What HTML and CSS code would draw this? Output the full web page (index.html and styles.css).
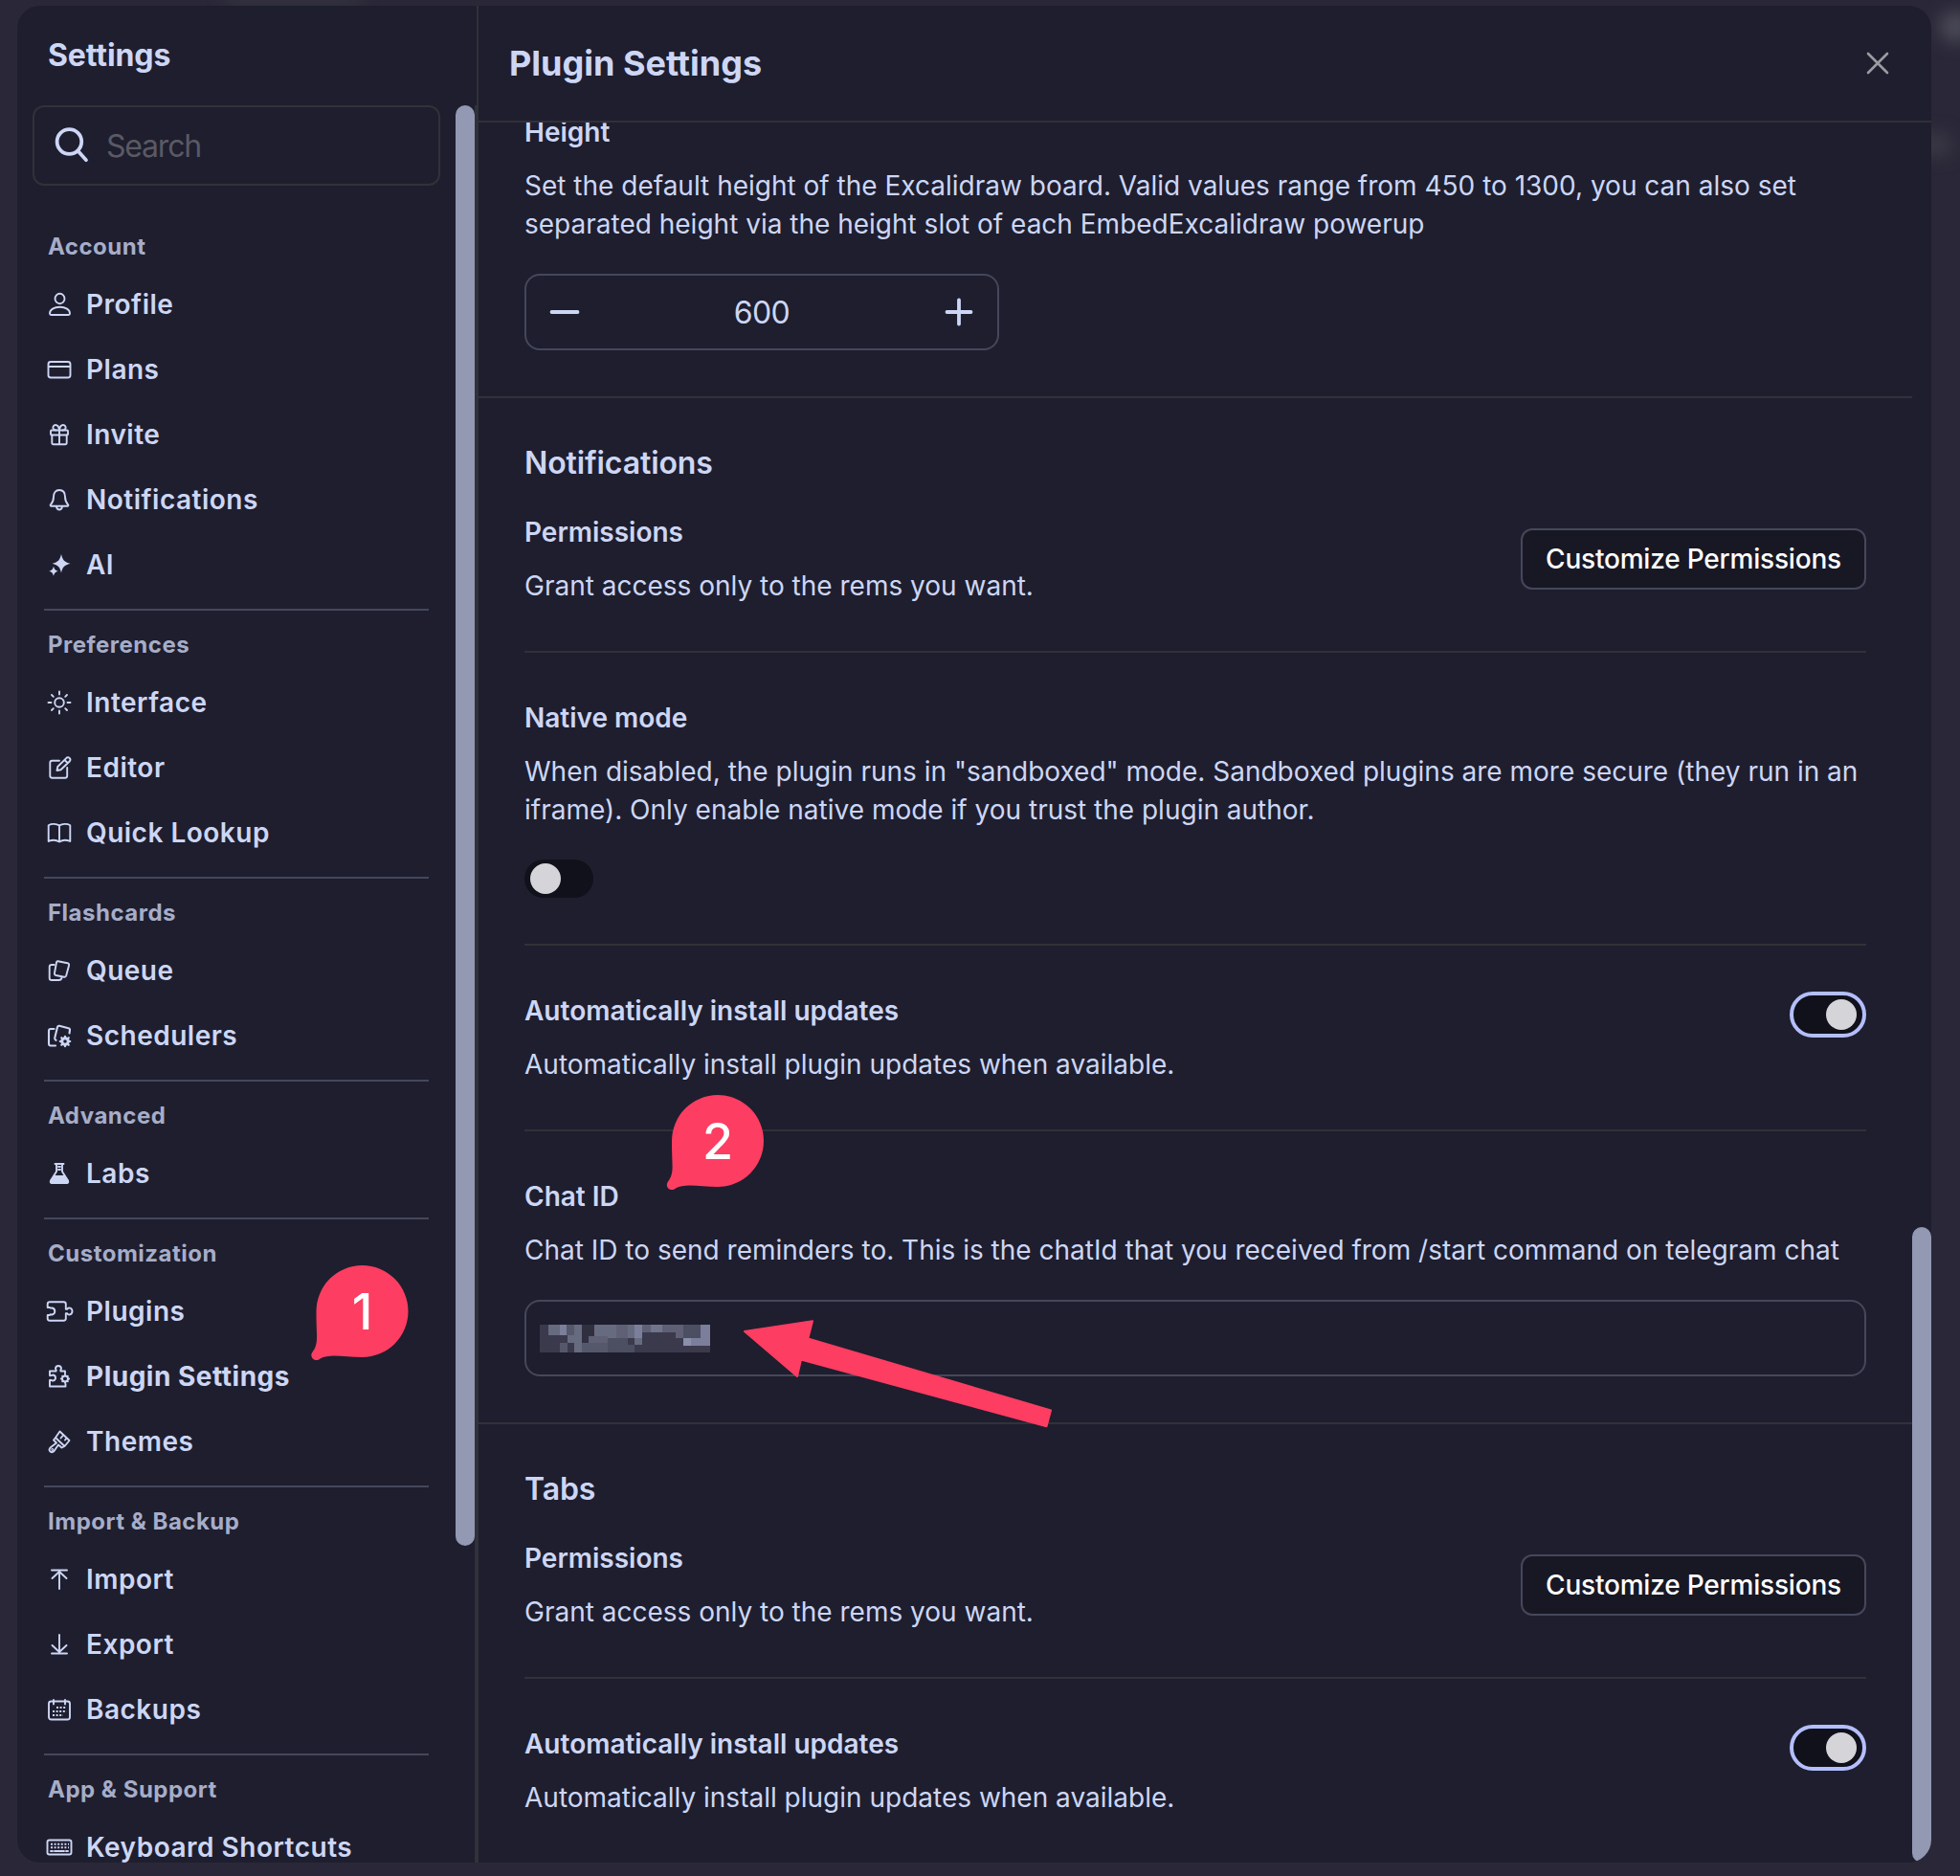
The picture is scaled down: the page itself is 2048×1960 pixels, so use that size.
FILE: index.html
```html
<!DOCTYPE html>
<html lang="en">
<head>
<meta charset="utf-8">
<title>Plugin Settings</title>
<link rel="stylesheet" href="styles.css">
</head>
<body>
<div class="glow glow-top"></div>
<div class="glow glow-avatar"></div>
<div class="glow glow-side"></div>
<div class="modal">
  <aside class="sidebar">
    <h2 class="sidebar-title">Settings</h2>
    <div class="sidebar-body">
      <div class="sidebar-list">
        <div class="search">
          <svg class="search-icon" viewBox="0 0 36 38"><circle cx="15.4" cy="15" r="12.8"/><path d="M24.5 24.8 33 34.2"/></svg>
          <span class="search-text">Search</span>
        </div>
        <section class="group">
          <h3>Account</h3>
          <a><svg viewBox="0 0 24 24"><ellipse cx="12.5" cy="6" rx="5" ry="5.2"/><path d="M2 21.5C2 17.500 6.500 14.800 12.500 14.800S23 17.500 23 21.500Q23 23 21.500 23H3.500Q2 23 2 21.500Z"/></svg><span>Profile</span></a>
          <a><svg viewBox="0 0 24 24"><rect x=".5" y="4" width="23" height="16.500" rx="2.500"/><path d="M1 9H23"/></svg><span>Plans</span></a>
          <a><svg viewBox="0 0 24 24"><rect x="3" y="7.500" width="18" height="5" rx="1"/><path d="M4.300 12.500V20.500Q4.300 22.300 6 22.300H18Q19.700 22.300 19.700 20.500V12.500M12 7.500V22.300M12 7.500C11.500 3.500 10 2 8 2S5 4 5.500 5.500 7 7.500 8.500 7.500M12 7.500C12.500 3.500 14 2 16 2S19 4 18.500 5.500 17 7.500 15.500 7.500"/></svg><span>Invite</span></a>
          <a><svg viewBox="0 0 24 24"><path d="M12 2C8 2 6 5 6 9C6 14 4.500 15.500 2.700 17.500Q2.500 18.700 3.500 18.700H20.500Q21.500 18.700 21.300 17.500C19.500 15.500 18 14 18 9C18 5 16 2 12 2ZM9 19.500C9.500 21.800 10.500 22.500 12 22.500S14.500 21.800 15 19.500"/></svg><span>Notifications</span></a>
          <a><svg class="solid" viewBox="0 0 24 24"><path d="M14 1C15.700 7.500 17 9 23.500 10.800C17 12.600 15.700 14.100 14 20.600C12.300 14.100 11 12.600 4.500 10.800C11 9 12.300 7.500 14 1ZM6 13.700C7 17 7.500 17.700 11 18.700C7.500 19.700 7 20.400 6 23.700C5 20.400 4.500 19.700 1 18.700C4.500 17.700 5 17 6 13.700Z"/></svg><span>AI</span></a>
        </section>
        <section class="group">
          <h3>Preferences</h3>
          <a><svg viewBox="0 0 24 24"><circle cx="12" cy="12" r="4.800"/><path d="M12 .5V3.500M12 20.500V23.500M.5 12H3.500M20.500 12H23.500M4 4 5.800 5.800M18.200 18.200 20 20M4 20 5.800 18.200M18.200 5.800 20 4"/></svg><span>Interface</span></a>
          <a><svg viewBox="0 0 24 24"><path d="M12 4.800H4.500Q2.300 4.800 2.300 7V20.500Q2.300 22.700 4.500 22.700H18Q20.200 22.700 20.200 20.500V12M9.500 15 10.300 11 19.500 1.800Q21 .5 22.600 1.900T22.900 5.200L13.500 14.200ZM17.500 4 20.500 7"/></svg><span>Editor</span></a>
          <a><svg viewBox="0 0 24 24"><path d="M12 4.500C9 2.500 4 2.300 .7 4.200V21C4 19.600 9 19.600 12 21.500C15 19.600 20 19.600 23.300 21V4.200C20 2.300 15 2.500 12 4.500ZM12 4.500V21.500"/></svg><span>Quick Lookup</span></a>
        </section>
        <section class="group">
          <h3>Flashcards</h3>
          <a><svg viewBox="0 0 24 24"><path d="M6.500 6H4Q1.700 6 1.700 8V20Q1.700 22 4 22H11.500Q14 22 14.500 19.500M10.500 2.200 20.500 4.200Q22.500 4.700 22 6.700L19.200 17.300Q18.700 19 17 18.700L8.500 17Q6.500 16.500 7 14.500L9 3.500Q9.300 2 10.500 2.200Z"/></svg><span>Queue</span></a>
          <a><svg class="heavy" viewBox="0 0 24 24"><path d="M6.500 5H3Q1 5 1 7V20.500Q1 22.500 3 22.500H8M22.500 9.500 23 6Q23.300 4.500 21.500 4.200L12 1.800Q10.500 1.500 10 3L7.200 14.500Q7 16 8.500 16.800"/><circle class="ring" cx="18" cy="18" r="3.300"/><path d="M18 12.700V14M18 22V23.300M12.700 18H14M22 18H23.300M14.200 14.200 15 15M21 21 21.800 21.800M14.200 21.800 15 21M21 15 21.800 14.200"/></svg><span>Schedulers</span></a>
        </section>
        <section class="group">
          <h3>Advanced</h3>
          <a><svg viewBox="0 0 24 24"><path d="M7.500 2H16.500M9 2V10L3 19.500Q2 22 4.500 22H19.500Q22 22 21 19.500L15 10V2M11 5H13M11 8H13"/><path class="fill" d="M6.500 15H17.500L21 20Q21.500 22 19.500 22H4.500Q2.500 22 3 20Z"/></svg><span>Labs</span></a>
        </section>
        <section class="group">
          <h3>Customization</h3>
          <a><svg viewBox="0 0 24 24"><path d="M-.3 8V4.500Q-.3 2.300 2 2.300H16.500Q18.800 2.300 18.800 4.500V9.800H20.300C21 7.800 25.500 8 25.500 12S21 16.200 20.300 14.200H18.800V19.500Q18.800 21.700 16.500 21.700H2Q-.3 21.700-.3 19.500V16H2C3 14.500 3 15.800 4.500 15.500Q7.300 14.800 7.300 12T4.500 8.500C3 8.200 3 9.500 2 8Z"/></svg><span>Plugins</span></a>
          <a class="current"><svg viewBox="0 0 24 24"><path d="M18 9V6.500H13.500C12.500 5.500 14 5 14 3.500Q13.500 1 11 1T8 3.500C8 5 9.500 5.500 8.500 6.500H2V11C3 12 4 10.500 5.500 10.500Q8 11 8 13.500T5.500 16.500C4 16.500 3 15 2 16V22.500H18.500V20"/><circle cx="18" cy="14.500" r="3"/><path d="M18 10.300V11.500M18 17.500V18.700M13.800 14.500H15M21 14.500H22.200M15.200 11.700 15.900 12.400M20.100 16.600 20.800 17.300M15.200 17.300 15.900 16.600M20.100 12.400 20.800 11.700"/></svg><span>Plugin Settings</span></a>
          <a><svg viewBox="0 0 24 24"><path d="M12.500 1.500 22.500 11 17.500 17 8 8ZM8 8 6 10.500 9 13.500 2.500 18.500Q.5 21 2.500 22.500T6.500 22L11 15.500 14.500 18.500 17.500 17M16 5.500 13.500 8.500M19.500 8.500 18 10.500"/><circle cx="4.700" cy="20.500" r=".5"/></svg><span>Themes</span></a>
        </section>
        <section class="group">
          <h3>Import &amp; Backup</h3>
          <a><svg viewBox="0 0 24 24"><path d="M4 2.500H20M12 4V22M4.500 11 12 4 19.500 11"/></svg><span>Import</span></a>
          <a><svg viewBox="0 0 24 24"><path d="M4 21.500H20M12 2V20M4.500 13 12 20 19.500 13"/></svg><span>Export</span></a>
          <a><svg viewBox="0 0 24 24"><rect x="1" y="3.500" width="22" height="19" rx="2.500"/><path d="M6 2V6.500M18 2V6.500"/><path class="dots" d="M9 10H19.500M5 14H19.500M5 18H16"/></svg><span>Backups</span></a>
        </section>
        <section class="group">
          <h3>App &amp; Support</h3>
          <a><svg viewBox="0 0 24 24"><rect x="-.5" y="4.500" width="25" height="15" rx="2"/><path class="dots" d="M3 8.700H22M3 12.300H22"/><path d="M3 16H5M7 16H17M19 16H21"/></svg><span>Keyboard Shortcuts</span></a>
        </section>
      </div>
      <div class="thumb sidebar-thumb"></div>
    </div>
  </aside>
  <main class="main">
    <header class="main-header">
      <h1>Plugin Settings</h1>
      <svg class="close" viewBox="0 0 24 24"><path d="M2 2 22 22M22 2 2 22"/></svg>
    </header>
    <div class="scroller">
      <div class="content">
        <section class="plugin plugin-first">
          <div class="setting">
            <h4>Height</h4>
            <p>Set the default height of the Excalidraw board. Valid values range from 450 to 1300, you can also set<br>separated height via the height slot of each EmbedExcalidraw powerup</p>
            <div class="stepper">
              <svg viewBox="0 0 32 32"><path d="M2.500 16H29.500"/></svg>
              <span>600</span>
              <svg viewBox="0 0 32 32"><path d="M3.500 16H28.500M16 3.500V28.500"/></svg>
            </div>
          </div>
        </section>
        <section class="plugin">
          <h3 class="plugin-name">Notifications</h3>
          <div class="setting split no-top">
            <div><h4>Permissions</h4><p>Grant access only to the rems you want.</p></div>
            <button class="button">Customize Permissions</button>
          </div>
          <div class="setting">
            <h4>Native mode</h4>
            <p>When disabled, the plugin runs in "sandboxed" mode. Sandboxed plugins are more secure (they run in an<br>iframe). Only enable native mode if you trust the plugin author.</p>
            <div class="toggle"><i></i></div>
          </div>
          <div class="setting split split-top">
            <div><h4>Automatically install updates</h4><p>Automatically install plugin updates when available.</p></div>
            <div class="toggle on"><i></i></div>
          </div>
          <div class="setting">
            <h4>Chat ID</h4>
            <p>Chat ID to send reminders to. This is the chatId that you received from /start command on telegram chat</p>
            <div class="input">
              <svg class="mosaic" viewBox="0 0 178 29" shape-rendering="crispEdges">
                <path fill="#3b3a4c" d="M0 0H178V29H0Z"/>
                <path fill="#676b80" d="M9 0H21V11H9ZM36 0H44V29H36ZM57 0H80V14H57ZM92 0H99V14H92ZM29 11H36V19H29ZM99 14H107V21H99Z"/>
                <path fill="#7b7f9b" d="M21 0H28V11H21ZM99 0H107V14H99ZM168 0H178V22H168ZM158 14H178V22H158Z"/>
                <path fill="#8a8fab" d="M150 14H158V22H150Z"/>
                <path fill="#5f6075" d="M80 0H92V14H80ZM107 0H116V8H107ZM128 0H150V8H128ZM142 0H150V14H142ZM51 12H71V19H51Z"/>
                <path fill="#70758b" d="M116 0H128V8H116Z"/>
                <path fill="#55576b" d="M28 0H36V11H28ZM21 19H29V29H21ZM44 19H71V29H44Z"/>
                <path fill="#4c4f61" d="M71 14H92V29H71ZM92 21H99V29H92ZM150 0H168V14H150Z"/>
                <path fill="#302f40" d="M44 0H57V12H51V19H44Z"/>
              </svg>
            </div>
          </div>
        </section>
        <section class="plugin">
          <h3 class="plugin-name">Tabs</h3>
          <div class="setting split no-top">
            <div><h4>Permissions</h4><p>Grant access only to the rems you want.</p></div>
            <button class="button">Customize Permissions</button>
          </div>
          <div class="setting split split-top">
            <div><h4>Automatically install updates</h4><p>Automatically install plugin updates when available.</p></div>
            <div class="toggle on"><i></i></div>
          </div>
        </section>
      </div>
      <div class="thumb main-thumb"></div>
    </div>
  </main>
</div>
<svg class="marks" viewBox="0 0 2048 1960">
  <defs><path id="pin" d="M0-48A48 48 0 0 1 0 48C-18 48-34 43.500-44 49.500C-49 54-56 48-52 42.500C-46 35-47.500 27-47.800 14C-48 8-48 4-48 0A48 48 0 0 1 0-48Z"/></defs>
  <g transform="translate(378.500 1370)"><use href="#pin"/><text y="19">1</text></g>
  <g transform="translate(750 1192)"><use href="#pin"/><text y="19">2</text></g>
  <path class="arrow" d="M778 1391 849 1380.300 844.300 1398.500 1098 1473.500 1093.500 1490.300 837 1420.500 833 1438Z"/>
</svg>
</body>
</html>
```
FILE: styles.css
```css
* { box-sizing: border-box; }
body {
  margin: 0;
  width: 2048px;
  height: 1960px;
  overflow: hidden;
  position: relative;
  padding: 6px 0 0 18px;
  background: #2a2838;
  color: #cdd6f4;
  font-family: Inter, sans-serif;
  font-size: 28px;
}
h1, h2, h3, h4, p { margin: 0; }

/* blurred page behind the dialog */
.glow { position: absolute; filter: blur(9px); }
.glow-top { left: 236px; top: -10px; width: 140px; height: 14px; background: #373643; }
.glow-avatar { left: 2026px; top: 12px; width: 36px; height: 32px; border-radius: 16px; background: #4b4a58; }
.glow-side { left: 2000px; top: 140px; width: 38px; height: 22px; background: #3b3945; }

.modal {
  position: relative;
  display: flex;
  width: 2000px;
  height: 1940px;
  border-radius: 24px;
  overflow: hidden;
  background: #1e1e2e;
}

.sidebar {
  display: flex;
  flex-direction: column;
  width: 482px;
  border-right: 2px solid #313139;
}
.sidebar-title {
  height: 104px;
  padding: 0 0 0 32px;
  line-height: 104px;
  font-size: 32px;
  font-weight: 700;
  letter-spacing: -0.1px;
}
.sidebar-body {
  display: flex;
  flex: 1;
  min-height: 0;
  border-right: 2px solid #313139;
}
.sidebar-list {
  width: 458px;
  padding: 0 16px;
  overflow: hidden;
}
.thumb { width: 20px; border-radius: 10px; background: #9399b2; }
.sidebar-thumb { height: 1505px; }

.search {
  display: flex;
  align-items: center;
  height: 84px;
  margin-bottom: 28px;
  padding-left: 21px;
  border: 2px solid #313139;
  border-radius: 12px;
}
.search-icon {
  width: 36px;
  height: 38px;
  fill: none;
  stroke: #cdd6f4;
  stroke-width: 3.8;
  stroke-linecap: round;
}
.search-text { margin-left: 18px; font-size: 32px; color: #5a5964; letter-spacing: -1.2px; }

.group { margin: 0 12px; padding-bottom: 12px; }
.group + .group { border-top: 2px solid #45475a; }
.group h3 {
  height: 62px;
  padding: 10px 0 0 4px;
  line-height: 52px;
  font-size: 24px;
  font-weight: 650;
  color: #a6adc8;
  letter-spacing: 0.5px;
}
.group a {
  display: flex;
  align-items: center;
  height: 68px;
  padding-left: 4px;
  font-weight: 560;
  letter-spacing: 0.5px;
}
.group a span { margin-left: 16px; white-space: nowrap; }
.group .current { font-weight: 650; }
.group svg {
  width: 24px;
  height: 24px;
  overflow: visible;
  fill: none;
  stroke: #cdd6f4;
  stroke-width: 1.9;
  stroke-linejoin: round;
  stroke-linecap: round;
}
.group .heavy { stroke-width: 2.1; }
.group .ring { stroke-width: 3; }
.group .solid { fill: #cdd6f4; stroke: none; }
.group .fill { fill: #cdd6f4; }
.group .dots { stroke-width: 2; stroke-linecap: butt; stroke-dasharray: 2 1.6; }

.main { display: flex; flex-direction: column; flex: 1; }
.main-header {
  display: flex;
  align-items: center;
  justify-content: space-between;
  height: 122px;
  padding: 0 44px 0 32px;
  border-bottom: 2px solid #313139;
}
.main-header h1 { font-size: 36px; font-weight: 700; }
.close { width: 24px; height: 24px; fill: none; stroke: #9c9ba2; stroke-width: 2.6; stroke-linecap: round; }

.scroller { display: flex; flex: 1; min-height: 0; overflow: hidden; }
.content { width: 1498px; margin-top: -58px; }
.main-thumb { height: 664px; margin-top: 1154px; }

.plugin { padding: 0 48px; border-bottom: 2px solid #313139; }
.plugin:last-child { border-bottom: 0; }
.plugin-name {
  height: 120px;
  padding-top: 48px;
  line-height: 40px;
  font-size: 32px;
  font-weight: 630;
  letter-spacing: -0.1px;
}
.setting { padding: 48px 0; }
.setting + .setting { border-top: 2px solid #313139; }
.no-top { padding-top: 0; }
.setting h4 { line-height: 40px; font-size: 28px; font-weight: 600; }
.setting p { margin-top: 16px; line-height: 40px; white-space: nowrap; }
.split { display: flex; align-items: center; justify-content: space-between; }
.split-top { align-items: flex-start; }

.stepper {
  display: flex;
  align-items: center;
  justify-content: space-between;
  width: 496px;
  height: 80px;
  margin-top: 32px;
  padding: 0 24px;
  border: 2px solid #45475a;
  border-radius: 16px;
  font-size: 32px;
  letter-spacing: -0.6px;
}
.stepper svg { width: 32px; height: 32px; fill: none; stroke: #cdd6f4; stroke-width: 3.8; stroke-linecap: round; }

.button {
  width: 361px;
  height: 64px;
  padding: 0;
  border: 2px solid #45475a;
  border-radius: 12px;
  background: #181825;
  color: #fff;
  font: 500 28px Inter, sans-serif;
  letter-spacing: -0.2px;
  white-space: nowrap;
}

.toggle {
  width: 72px;
  height: 40px;
  margin-top: 32px;
  padding: 4px 6px;
  border-radius: 24px;
  background: #11111b;
}
.toggle i { display: block; width: 32px; height: 32px; border-radius: 50%; background: #d5d4d9; }
.toggle.on { width: 80px; height: 48px; margin: 0; border: 4px solid #b4befe; }
.toggle.on i { margin-left: auto; }

.input {
  display: flex;
  align-items: center;
  height: 80px;
  margin-top: 32px;
  padding-left: 14px;
  border: 2px solid #45475a;
  border-radius: 16px;
}
.mosaic { width: 178px; height: 29px; }

/* annotations drawn over the dialog */
.marks { position: absolute; left: 0; top: 0; width: 2048px; height: 1960px; fill: #fd3d62; }
.marks text { fill: #fff; font-size: 52px; font-weight: 500; text-anchor: middle; }
.arrow { stroke: #fd3d62; stroke-width: 2; stroke-linejoin: round; }
```
